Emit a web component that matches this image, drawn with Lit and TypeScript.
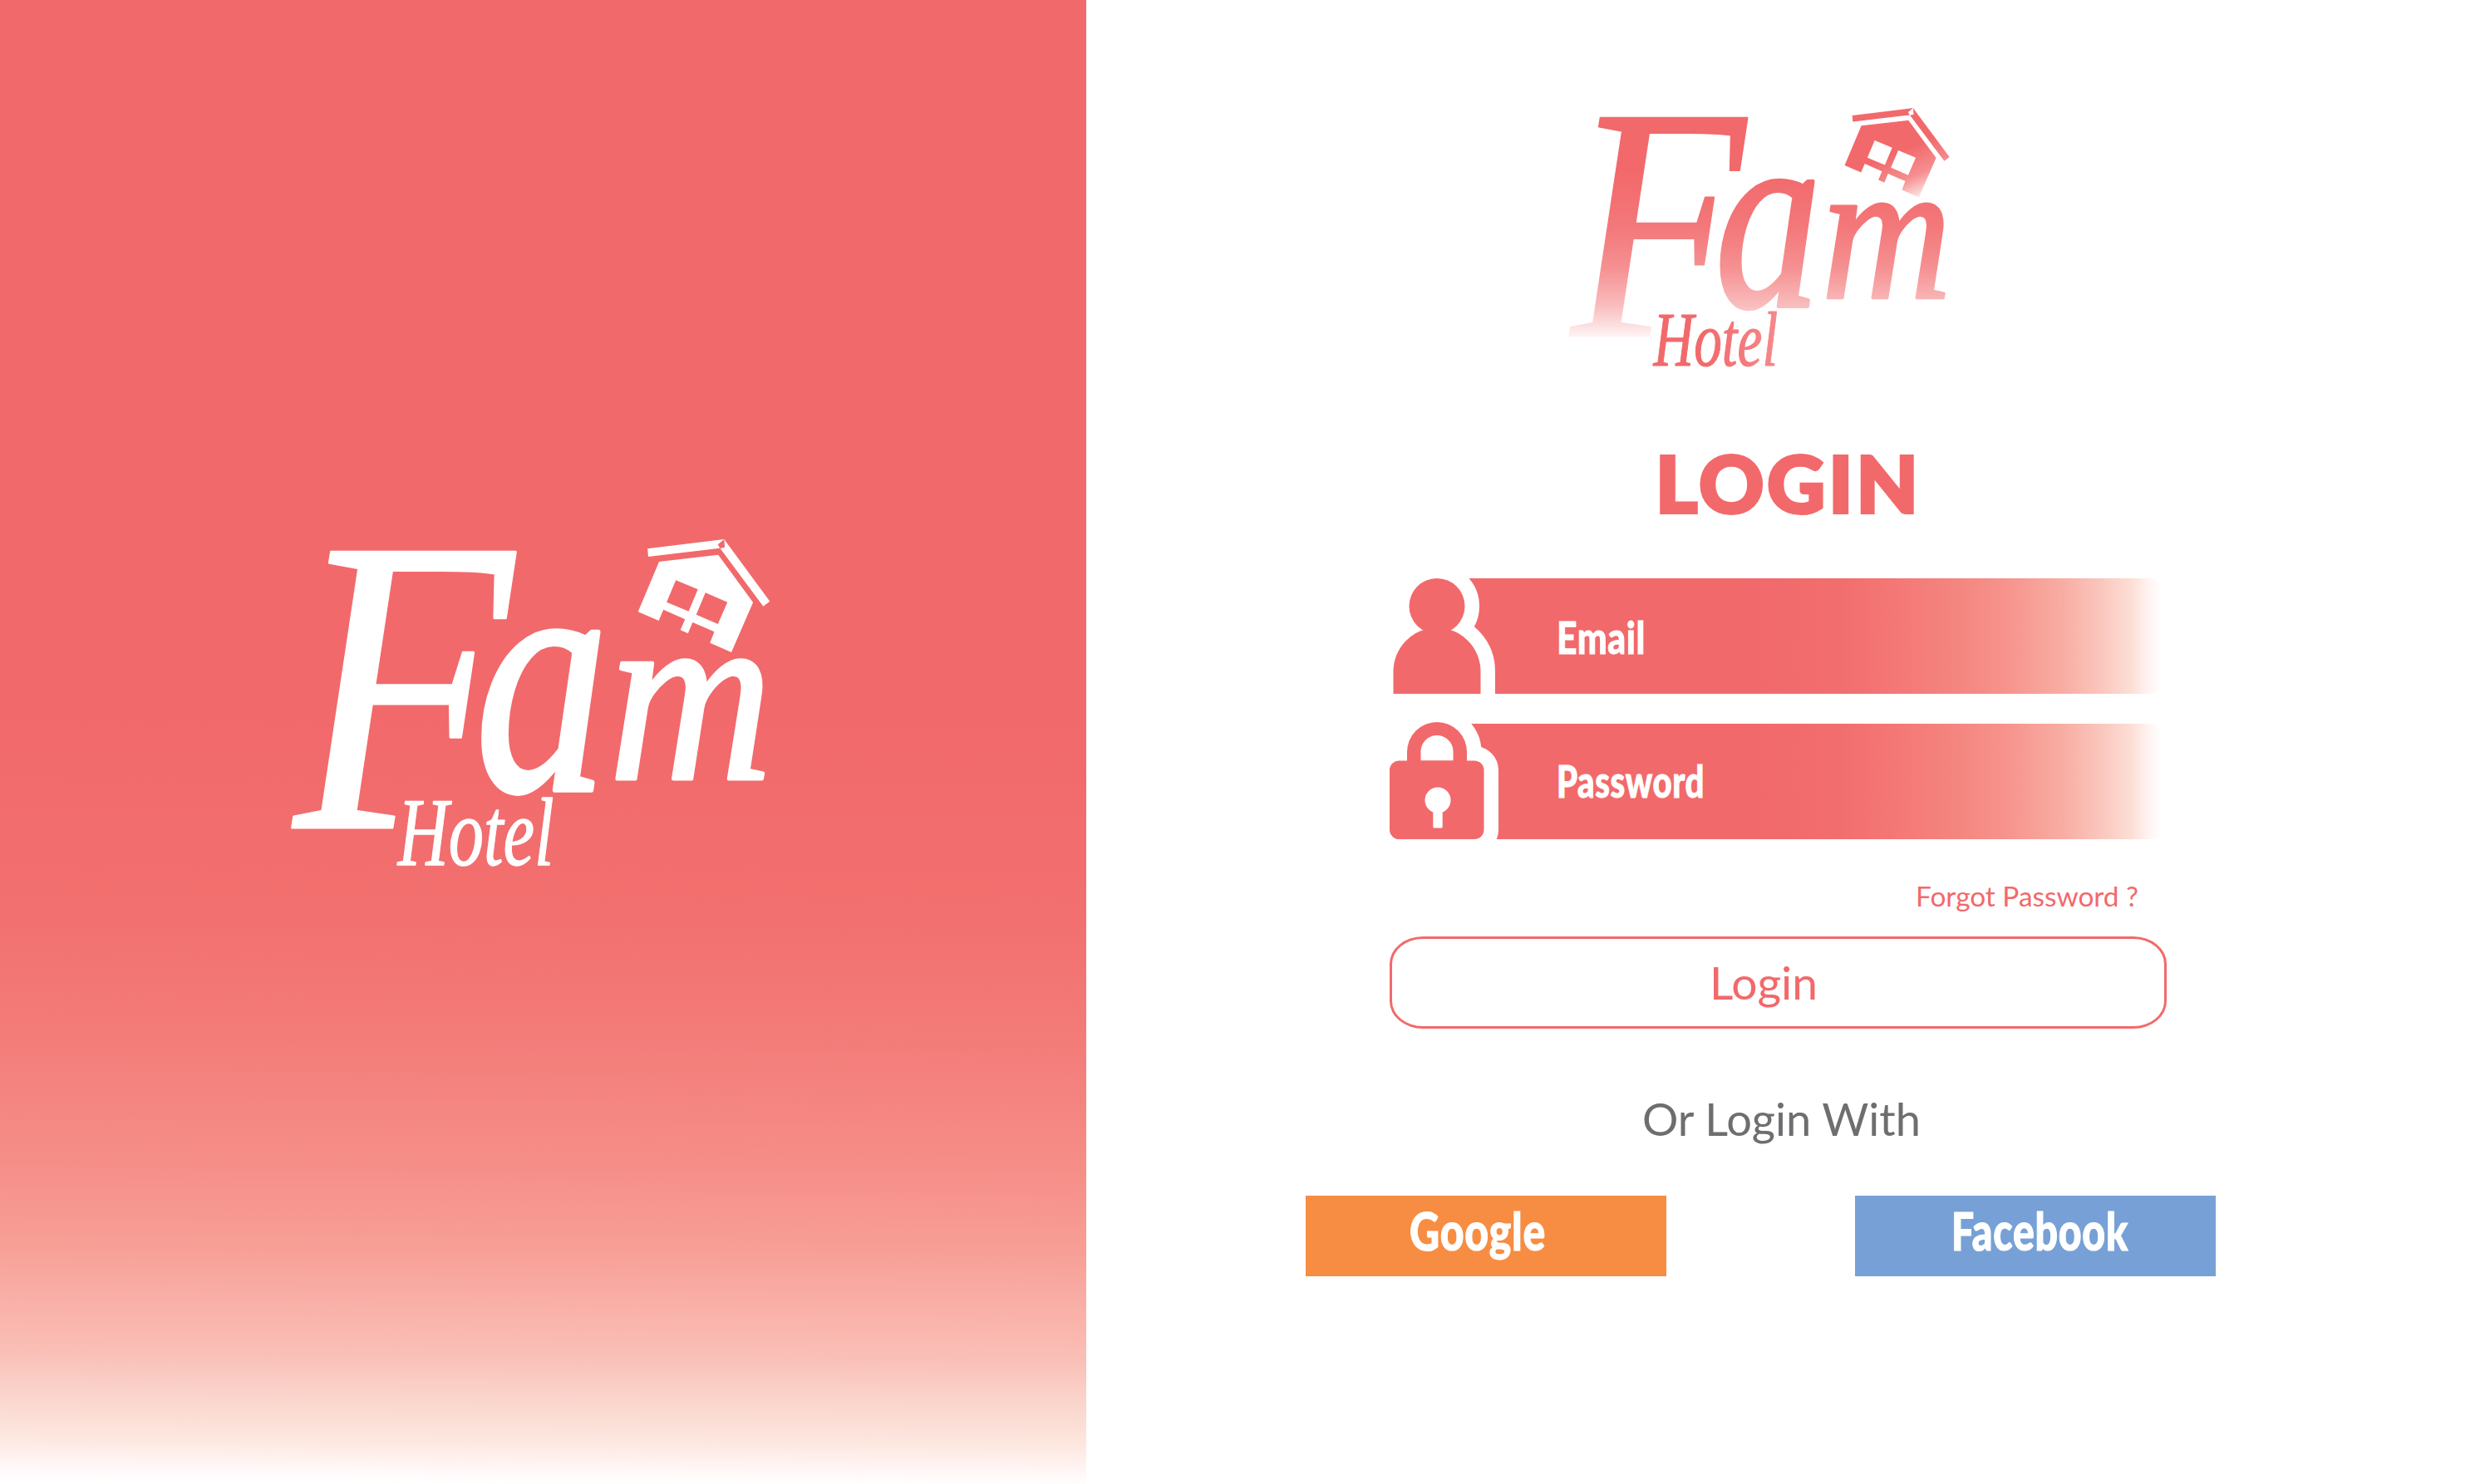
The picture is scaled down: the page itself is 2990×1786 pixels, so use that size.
import { LitElement, html, svg, css } from "lit";
import { customElement, property } from "lit/decorators.js";

/* One line of text, stretched to a given width. The box is as high as a capital letter. */
@customElement("fit-label")
class FitLabel extends LitElement {
  @property() text = "";
  @property({ type: Number }) width = 100;
  @property({ type: Number }) cap = 24;
  @property({ type: Number }) weight = 400;
  @property({ type: Number }) outline = 0;
  @property({ type: Number }) tracking = 0;

  static styles = css`
    :host { display: block; flex: none; }
    svg { display: block; overflow: visible; }
    text { font-family: Lato, "Open Sans", sans-serif; fill: currentColor; stroke: currentColor; }
  `;

  render() {
    return html`<svg width=${this.width} height=${this.cap}>
      ${svg`<text x="0" y=${this.cap} font-size=${this.cap / 0.72} font-weight=${this.weight}
        stroke-width=${this.outline} letter-spacing=${this.tracking}
        textLength=${this.width} lengthAdjust="spacingAndGlyphs">${this.text}</text>`}
    </svg>`;
  }
}

@customElement("fam-logo")
class FamLogo extends LitElement {
  @property({ type: Boolean }) faded = false;

  static styles = css`
    :host { display: block; flex: none; }
    svg { display: block; width: 100%; height: 100%; overflow: visible; fill: currentColor; }
    text {
      font-family: "Liberation Serif", serif;
      font-style: italic;
      font-size: 100px;
      stroke: currentColor;
      stroke-linejoin: round;
    }
    .cap { stroke-width: 0.6; }
    .big { stroke-width: 1.5; }
    .small { stroke-width: 1.2; }
  `;

  render() {
    const m = (id: string) => (this.faded ? `url(#${id})` : "none");
    return html`<svg viewBox="0 0 577 402" preserveAspectRatio="none" role="img" aria-label="Fam Hotel">
      <defs>
        <linearGradient id="gw" gradientUnits="userSpaceOnUse" x1="0" y1="93" x2="0" y2="1110">
          <stop offset="0.25" stop-color="#fff" />
          <stop offset="0.5" stop-color="#fff" stop-opacity="0.9" />
          <stop offset="0.68" stop-color="#fff" stop-opacity="0.74" />
          <stop offset="0.85" stop-color="#fff" stop-opacity="0.45" />
          <stop offset="1" stop-color="#fff" stop-opacity="0.05" />
        </linearGradient>
        <linearGradient id="gh" gradientUnits="userSpaceOnUse" x1="1250" y1="80" x2="1440" y2="450">
          <stop offset="0.45" stop-color="#fff" />
          <stop offset="0.75" stop-color="#fff" stop-opacity="0.75" />
          <stop offset="1" stop-color="#fff" stop-opacity="0.1" />
        </linearGradient>
        <linearGradient id="gt" gradientUnits="userSpaceOnUse" x1="372" y1="0" x2="860" y2="0">
          <stop offset="0.4" stop-color="#fff" />
          <stop offset="1" stop-color="#fff" stop-opacity="0.78" />
        </linearGradient>
        <mask id="mw" maskUnits="userSpaceOnUse" x="0" y="0" width="1600" height="1300">
          <rect width="1600" height="1300" fill="url(#gw)" />
        </mask>
        <mask id="mh" maskUnits="userSpaceOnUse" x="0" y="0" width="1600" height="1300">
          <rect width="1600" height="1300" fill="url(#gh)" />
        </mask>
        <mask id="mt" maskUnits="userSpaceOnUse" x="0" y="0" width="1600" height="1300">
          <rect width="1600" height="1300" fill="url(#gt)" />
        </mask>
      </defs>
      <g transform="translate(-21 -19) scale(0.3954 0.33333)">
        <g mask=${m("mw")}>
          <text class="cap" transform="translate(60 1098) scale(10.9 15.2)">F</text>
          <text class="big" transform="translate(612 962) scale(8.1 12.2)">a</text>
          <text class="big" transform="translate(1018 922) scale(6.9 9.1)">m</text>
        </g>
        <g mask=${m("mt")}>
          <text class="small" transform="translate(376 1232) scale(2.14 3.5)">Hotel</text>
        </g>
        <g mask=${m("mh")}>
          <path d="M1136 91 1369 57 1350 76 1356 89 1138 120ZM1369 57 1508 281 1488 299 1357 90 1371 86Z" />
          <path fill-rule="evenodd" d="M1171 138 1351 113 1457 285 1391 465 1326 431 1339 391 1273 357 1259 397 1236 385 1250 346 1184 311 1170 351 1107 319ZM1222 205 1289 238 1261 317 1194 284ZM1312 250 1379 284 1350 363 1284 329Z" />
        </g>
      </g>
    </svg>`;
  }
}

@customElement("app-root")
class AppRoot extends LitElement {
  static styles = css`
    :host { display: block; }
    .page {
      display: grid;
      grid-template-columns: 1306.5px 1fr;
      height: 1786px;
      background: #fff;
      color: #f2696b;
      overflow: hidden;
    }
    .brand {
      padding: 649px 0 0 351px;
      color: #fff;
      background: linear-gradient(180.4deg, #f2696b 0%, #f2696b 48%, #f2706f 61.5%, #f37b78 69.4%,
        #f68e88 78.4%, #f79f96 84%, #f8a9a1 86.2%, #fab8af 89.6%, #f9c1b9 91.4%, #fad0c8 93.4%,
        #fbddd4 95.3%, #fde9e2 97.1%, #fff1ef 98.1%, #fffaf9 99%, #fff 99.8%);
    }
    .brand fam-logo { width: 577px; height: 402px; }
    .panel { padding: 129.5px 325px 0 264.5px; display: flex; flex-direction: column; }
    .panel fam-logo { width: 459px; height: 318px; margin-left: 317px; }
    .title { margin: 101.5px 0 0 421px; }
    .form { width: 935px; margin: 79.5px 0 0 101px; display: flex; flex-direction: column; }
    .field { display: flex; height: 139px; }
    .field + .field { margin-top: 36px; }
    .bar {
      flex: none;
      box-sizing: border-box;
      width: 862px;
      height: 139px;
      margin-left: -45px;
      padding: 52px 0 0 132px;
      border-radius: 0 16px 16px 0;
      color: #fff;
      background: linear-gradient(90deg, #f2696b 43%, #f26e6e 55%, #f47876 63%, #f4857f 71%, #f6938c 78%,
        #f8ada3 86%, #fac5bc 91%, #fcded5 95.5%, #fff3f1 97.8%, #fff 99.8%);
    }
    .field + .field .bar { padding-top: 50px; }
    .icon { position: relative; z-index: 1; flex: none; width: 113.5px; height: 139px; overflow: visible; fill: #f2696b; }
    .halo { fill: #fff; stroke: #fff; stroke-width: 35px; stroke-linejoin: round; }
    .hole { fill: #fff; }
    .forgot { align-self: flex-end; margin: 57px 34px 0 0; }
    .submit {
      display: flex;
      box-sizing: border-box;
      width: 935px;
      height: 110.5px;
      margin: 36px 0 0;
      padding: 33.5px 0 0 382px;
      border: 3px solid #f2696b;
      border-radius: 40px / 33px;
      background: none;
      color: inherit;
    }
    .or { margin: 90.5px 0 0 405px; color: #6d6e70; }
    .social { display: flex; gap: 226.5px; margin-top: 71.5px; }
    .provider { box-sizing: border-box; width: 434px; height: 97.5px; padding: 21px 0 0; border: 0; color: #fff; display: flex; }
    .google { background: #f78d42; padding-left: 125px; }
    .facebook { background: #77a1d6; padding-left: 116px; }
  `;

  render() {
    return html`<main class="page">
      <section class="brand"><fam-logo></fam-logo></section>
      <section class="panel">
        <fam-logo faded></fam-logo>
        <fit-label class="title" text="LOGIN" width="320" cap="67.5" weight="900" outline="4" tracking="4"></fit-label>
        <div class="form">
          <div class="field">
            <svg class="icon" viewBox="0 0 113.5 139">
              <g class="halo"><circle cx="57" cy="33.5" r="33.5" /><path d="M4.5 139V112a52.5 52.5 0 0 1 105 0V139Z" /></g>
              <circle cx="57" cy="33.5" r="33.5" />
              <path d="M4.5 139V112a52.5 52.5 0 0 1 105 0V139Z" />
            </svg>
            <div class="bar"><fit-label text="Email" width="107" cap="39" weight="900" outline="1" tracking="0.8"></fit-label></div>
          </div>
          <div class="field">
            <svg class="icon" viewBox="0 0 113.5 139">
              <g class="halo">
                <path d="M21 46V34a36 36 0 0 1 72 0V46Z" />
                <rect x="0" y="44.5" width="113.5" height="94.5" rx="11.5" />
              </g>
              <path d="M21 46V34a36 36 0 0 1 72 0V46Z" />
              <path class="hole" d="M37.5 44.5V33.5a19.5 19.5 0 0 1 39 0V44.5Z" />
              <rect x="0" y="44.5" width="113.5" height="94.5" rx="11.5" />
              <circle class="hole" cx="58" cy="92" r="15.5" />
              <rect class="hole" x="52.3" y="100" width="11.4" height="25.5" rx="1.5" />
            </svg>
            <div class="bar"><fit-label text="Password" width="178" cap="39" weight="900" outline="1" tracking="0.8"></fit-label></div>
          </div>
          <fit-label class="forgot" text="Forgot Password ?" width="268" cap="24" weight="400"></fit-label>
          <button class="submit"><fit-label text="Login" width="130" cap="39" weight="400"></fit-label></button>
        </div>
        <fit-label class="or" text="Or Login With" width="335" cap="39" weight="400"></fit-label>
        <div class="social">
          <button class="provider google"><fit-label text="Google" width="164" cap="45" weight="900" outline="1.2" tracking="1"></fit-label></button>
          <button class="provider facebook"><fit-label text="Facebook" width="213" cap="45" weight="900" outline="1.2" tracking="1"></fit-label></button>
        </div>
      </section>
    </main>`;
  }
}
